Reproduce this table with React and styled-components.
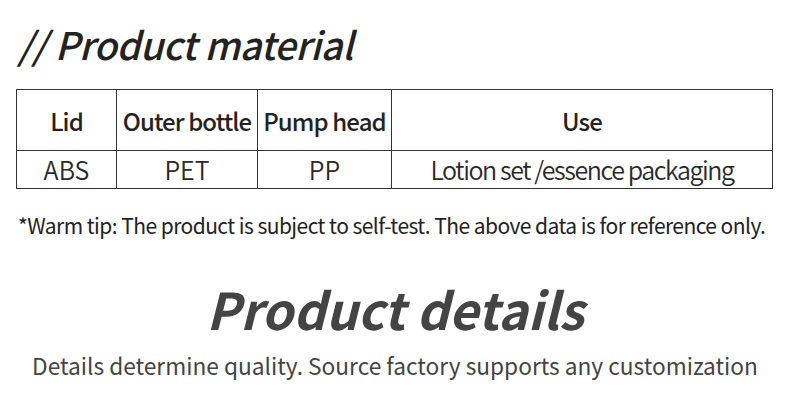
import React from "react";
import styled, { createGlobalStyle } from "styled-components";

const Global = createGlobalStyle`
  html, body { margin: 0; padding: 0; background: #fff; }
  body { font-family: "Noto Sans CJK SC", "Noto Sans", sans-serif; color: #222; }
`;

const Page = styled.div`
  width: 790px;
  height: 406px;
  overflow: hidden;
  display: flex;
  flex-direction: column;
`;

const Title = styled.h1`
  margin: 18px 0 0 18px;
  font-size: 38px;
  line-height: 52px;
  font-weight: 500;
  font-style: italic;
  color: #222;
  letter-spacing: -0.5px;
`;

const Table = styled.table`
  margin: 19px 0 0 16px;
  width: 757px;
  border-collapse: collapse;
  table-layout: fixed;
`;

const Th = styled.th`
  border: 1px solid #333;
  height: 60px;
  padding: 0;
  font-size: 24px;
  font-weight: 500;
  color: #222;
  letter-spacing: -0.9px;
  text-align: center;
  white-space: nowrap;
  width: ${(p) => (p.$w ? `${p.$w}px` : "auto")};
`;

const Td = styled.td`
  border: 1px solid #333;
  height: 35px;
  padding: 0 0 2px;
  font-size: 25px;
  line-height: 30px;
  font-weight: 350;
  color: #2a2a2a;
  text-align: center;
  white-space: nowrap;
  letter-spacing: ${(p) => (p.$tight ? "-1.4px" : "0")};
`;

const Tip = styled.p`
  margin: 21px 0 0 18px;
  font-size: 21px;
  line-height: 30px;
  color: #222;
  letter-spacing: -0.55px;
  white-space: nowrap;
`;

const Details = styled.h2`
  margin: 38px 0 0 0;
  text-align: center;
  font-size: 50.5px;
  line-height: 60px;
  font-weight: 700;
  font-style: italic;
  color: #444;
`;

const Sub = styled.p`
  margin: 12px 0 0;
  text-align: center;
  font-size: 22.7px;
  line-height: 32px;
  color: #444;
`;

export default function App() {
  return (
    <Page>
      <Global />
      <Title>// Product material</Title>
      <Table>
        <thead>
          <tr>
            <Th $w={99}>Lid</Th>
            <Th $w={140}>Outer bottle</Th>
            <Th $w={133}>Pump head</Th>
            <Th>Use</Th>
          </tr>
        </thead>
        <tbody>
          <tr>
            <Td>ABS</Td>
            <Td>PET</Td>
            <Td>PP</Td>
            <Td $tight>Lotion set /essence packaging</Td>
          </tr>
        </tbody>
      </Table>
      <Tip>*Warm tip: The product is subject to self-test. The above data is for reference only.</Tip>
      <Details>Product details</Details>
      <Sub>Details determine quality. Source factory supports any customization</Sub>
    </Page>
  );
}
